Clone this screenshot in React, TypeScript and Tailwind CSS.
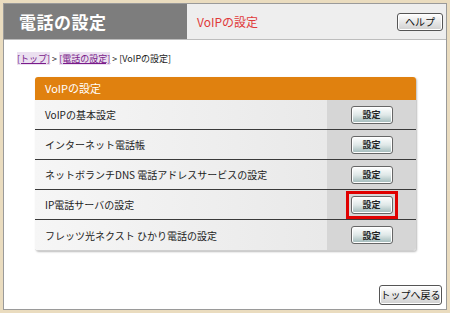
import React from 'react';

const font = { fontFamily: '"Noto Sans CJK JP", "Liberation Sans", sans-serif' };

const rows = [
  { label: 'VoIPの基本設定' },
  { label: 'インターネット電話帳' },
  { label: 'ネットボランチDNS 電話アドレスサービスの設定' },
  { label: 'IP電話サーバの設定', marked: true },
  { label: 'フレッツ光ネクスト ひかり電話の設定' },
];

const SetButton = () => (
  <button className="w-[42px] h-[18px] rounded-[3px] border border-[#666] bg-gradient-to-b from-[#ffffff] via-[#dfe8e8] to-[#9fb8b8] text-[9px] font-bold text-[#222] leading-none shadow-[inset_0_0_0_1px_#fff]">
    設定
  </button>
);

const GrayButton = ({ children, className }: any) => (
  <button className={`rounded-[3px] border border-[#555] bg-gradient-to-b from-[#ffffff] to-[#d0d0d0] text-[10px] text-[#111] leading-none shadow-[inset_0_0_0_1px_#fff] ${className}`}>
    {children}
  </button>
);

export default function App() {
  return (
    <div className="w-[450px] h-[313px] bg-[#eadcbf] p-[3px]" style={font}>
      <div className="h-[307px] w-[444px] border border-[#9a9a9a] bg-white flex flex-col">
        {/* header */}
        <div className="flex h-[36px] border-b border-[#bdbdbd]">
          <div className="w-[183px] bg-[#7d7d7d] flex items-center pl-[15px]">
            <h1 className="text-white font-bold text-[17px] tracking-[0.5px]">電話の設定</h1>
          </div>
          <div className="flex-1 bg-[#eeeeee] flex items-center justify-between pl-[10px] pr-[3px]">
            <span className="text-[#e03a3a] text-[12px]">VoIPの設定</span>
            <GrayButton className="w-[46px] h-[18px] text-[9px]">ヘルプ</GrayButton>
          </div>
        </div>

        {/* breadcrumb */}
        <div className="pl-[13px] pt-[14px] text-[9px] text-[#222] leading-none">
          <span className="text-[#7a1a8a] underline bg-[#ebe0f0]">[トップ]</span>
          <span> &gt; </span>
          <span className="text-[#7a1a8a] underline bg-[#ebe0f0]">[電話の設定]</span>
          <span> &gt; [VoIPの設定]</span>
        </div>

        {/* panel */}
        <div className="ml-[31px] mt-[14px] w-[381px] rounded-[3px] overflow-hidden shadow-[1px_1px_2px_#bbb] border-b border-[#cfcfcf]">
          <div className="h-[23px] bg-[#e0810f] flex items-center pl-[10px] text-white text-[11px]">VoIPの設定</div>
          {rows.map((r, i) => (
            <div
              key={r.label}
              className={`flex h-[30px] ${i < rows.length - 1 ? 'border-b border-[#3a3a3a]' : ''}`}
            >
              <div className="flex-1 bg-gradient-to-r from-[#f6f6f6] to-[#e9e9e9] flex items-center pl-[10px] text-[10px] text-[#222]">
                {r.label}
              </div>
              <div className="w-[89px] bg-[#d6d6d6] flex items-center justify-center">
                {r.marked ? (
                  <div className="border-[3px] border-[#e00000] p-[2px] flex">
                    <SetButton />
                  </div>
                ) : (
                  <SetButton />
                )}
              </div>
            </div>
          ))}
        </div>

        <div className="flex-1 flex items-end justify-end pr-[4px] pb-[4px]">
          <GrayButton className="w-[63px] h-[20px] text-[10px]">トップへ戻る</GrayButton>
        </div>
      </div>
    </div>
  );
}
